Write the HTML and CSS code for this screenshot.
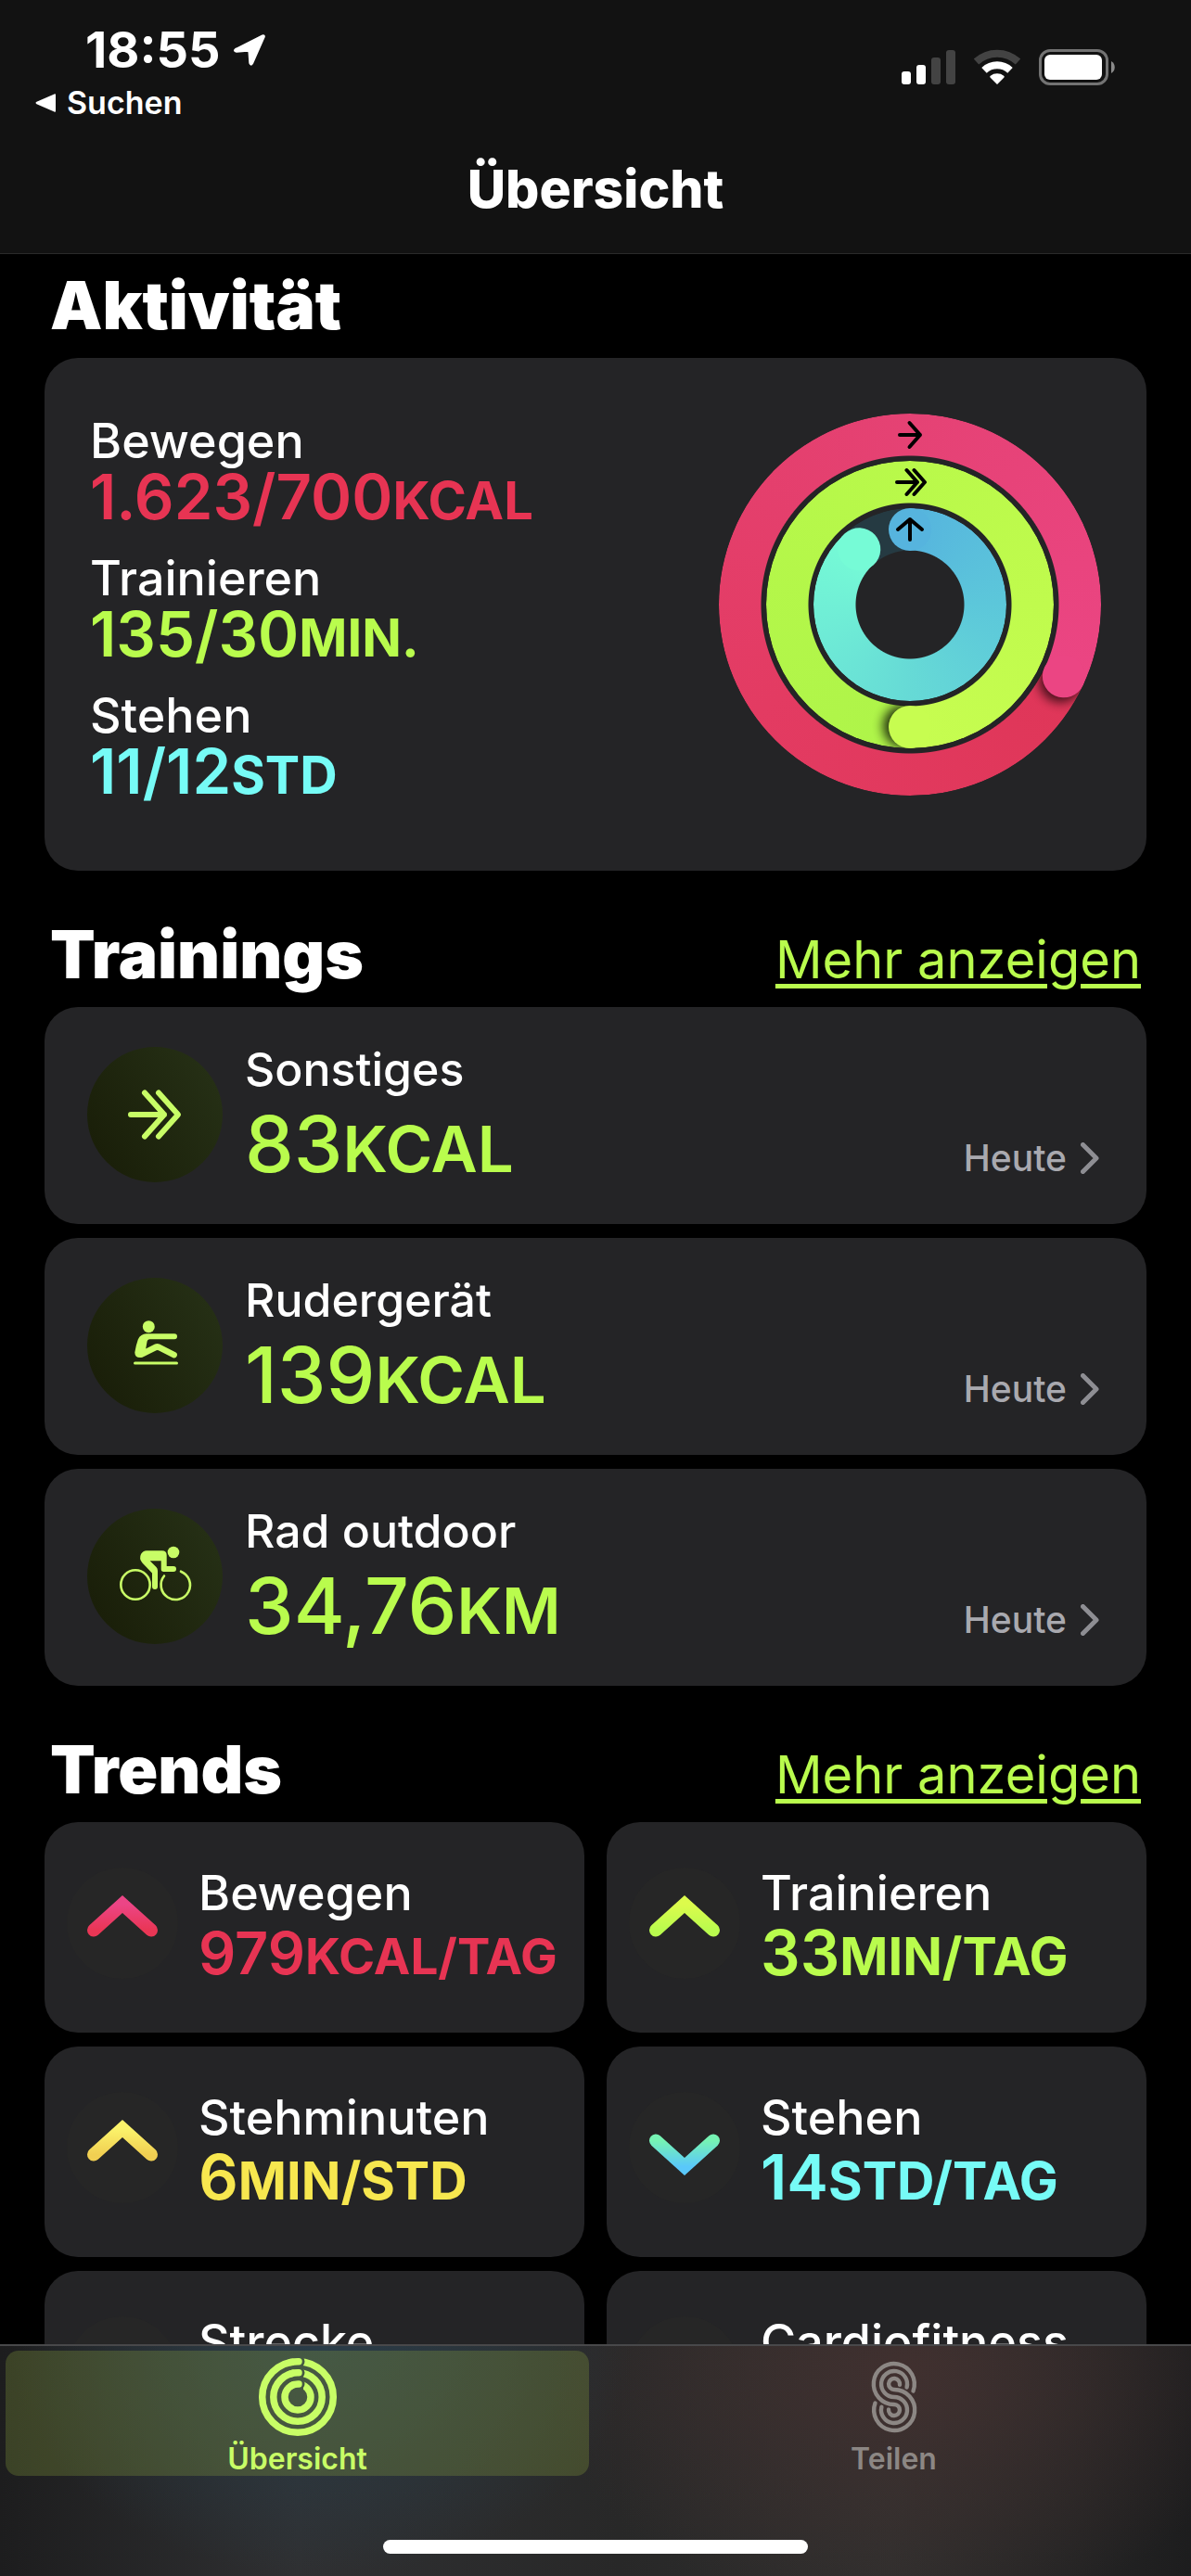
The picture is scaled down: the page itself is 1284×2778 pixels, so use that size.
FILE: index.html
```html
<!DOCTYPE html>
<html lang="de">

<head>
	<meta charset="UTF-8">
	<meta name="viewport" content="width=device-width, initial-scale=1.0">
	<title>Übersicht</title>
	<link rel="stylesheet" href="styles.css">
</head>

<body>
	<header class="topbar">
		<div class="status">
			<div class="status-left">
				<div class="clock">
					<span>18:55</span>
					<svg width="34" height="34" viewBox="0 0 34 34"><path d="M2 16 L31 1.500 Q33.500 .8 32.600 3.200 L20 31.500 Q18.300 34 17.300 31 L16.500 19.500 Q16.300 17.800 14.800 17.800 L3 18.800 Q-.5 18 2 16Z" fill="#fff" stroke="#fff" stroke-width="2" stroke-linejoin="round"/></svg>
				</div>
				<a class="back" href="#">
					<svg width="22" height="22" viewBox="0 0 22 22"><path d="M20.500 1.500 Q22 .6 22 2.500 V19.500 Q22 21.400 20.500 20.500 L1.500 12.200 Q-.5 11 1.500 9.800Z" fill="#fff"/></svg>
					<span>Suchen</span>
				</a>
			</div>
			<div class="status-right">
				<svg width="58" height="38" viewBox="0 0 58 38">
					<rect x="0" y="24" width="10" height="14" rx="3" fill="#fff"/>
					<rect x="16" y="17" width="10" height="21" rx="3" fill="#fff"/>
					<rect x="32" y="9" width="10" height="29" rx="3" fill="#434343"/>
					<rect x="48" y="1" width="10" height="37" rx="3" fill="#434343"/>
				</svg>
				<svg width="50" height="38" viewBox="0 0 50 38">
					<path d="M2.500 13.500 A33 33 0 0 1 47.500 13.500" fill="none" stroke="#434343" stroke-width="8"/>
					<path d="M11 22.800 A20.500 20.500 0 0 1 39 22.800" fill="none" stroke="#fff" stroke-width="8"/>
					<path d="M25 38 L17.500 30.500 Q16.800 29.500 17.800 28.800 A11.700 11.700 0 0 1 32.200 28.800 Q33.200 29.500 32.500 30.500Z" fill="#fff"/>
				</svg>
				<svg width="82" height="39" viewBox="0 0 82 39">
					<rect x="1.500" y="1.500" width="72" height="36" rx="10.500" fill="none" stroke="#737373" stroke-width="3"/>
					<rect x="6" y="6" width="62" height="27" rx="6" fill="#fff"/>
					<path d="M78 13 A7.500 7.500 0 0 1 78 26Z" fill="#8a8a8a"/>
				</svg>
			</div>
		</div>
		<h1>Übersicht</h1>
	</header>

	<main class="content">
		<section>
			<div class="section-head">
				<h2>Aktivität</h2>
			</div>
			<div class="card activity">
				<dl class="goals">
					<div>
						<dt>Bewegen</dt>
						<dd class="move">1.623/700<small>KCAL</small></dd>
					</div>
					<div>
						<dt>Trainieren</dt>
						<dd class="exercise">135/30<small>MIN.</small></dd>
					</div>
					<div>
						<dt>Stehen</dt>
						<dd class="stand">11/12<small>STD</small></dd>
					</div>
				</dl>
				<div class="rings">
					<div class="ring ring-move"></div>
					<div class="ring ring-exercise"></div>
					<div class="ring ring-stand"></div>
					<svg class="ring-caps" viewBox="0 0 412 412">
						<defs>
							<filter id="soft" x="-50%" y="-50%" width="200%" height="200%"><feGaussianBlur stdDeviation="6"/></filter>
							<clipPath id="halfMove"><path d="M206 0 A206 206 0 0 1 206 412 V366 A160 160 0 0 0 206 46Z"/></clipPath>
							<clipPath id="halfExercise"><path d="M206 51 A155 155 0 0 1 206 361 V315 A109 109 0 0 0 206 97Z"/></clipPath>
						</defs>
						<g transform="rotate(115 206 206)">
							<g clip-path="url(#halfMove)"><circle cx="212" cy="24" r="23" fill="#000" opacity=".7" filter="url(#soft)"/></g>
							<circle cx="206" cy="23" r="23" fill="#eb4583"/>
						</g>
						<g transform="rotate(180 206 206)">
							<g clip-path="url(#halfExercise)"><circle cx="212" cy="75" r="23" fill="#000" opacity=".8" filter="url(#soft)"/></g>
							<circle cx="206" cy="74" r="23" fill="#c7fd50"/>
						</g>
						<circle cx="206" cy="125" r="23" fill="#56b4de"/>
						<circle cx="206" cy="125" r="23" fill="#76fbd6" transform="rotate(-42.500 206 206)"/>
						<g fill="none" stroke="#000" stroke-width="4" stroke-linecap="round" stroke-linejoin="round">
							<path d="M195 23 H217 M205.500 10 L217 23 L205.500 36"/>
							<path d="M192 74 H214 M202.500 61 L214 74 L202.500 87 M210.500 61 L222 74 L210.500 87"/>
							<path d="M206 136 V114 M193 125 L206 114 L219 125"/>
						</g>
					</svg>
				</div>
			</div>
		</section>

		<section>
			<div class="section-head">
				<h2>Trainings</h2>
				<a href="#">Mehr anzeigen</a>
			</div>
			<div class="list">
				<a class="card workout" href="#">
					<svg class="badge" viewBox="0 0 146 146" fill="none" stroke="#c8fd66" stroke-width="6" stroke-linecap="round" stroke-linejoin="round">
						<path d="M47 73 H83 M62 49.500 L83 73 L62 96.500 M77 49.500 L98 73 L77 96.500"/>
					</svg>
					<div class="info">
						<span class="label">Sonstiges</span>
						<strong>83<small>KCAL</small></strong>
					</div>
					<span class="when">Heute
						<svg width="20" height="34" viewBox="0 0 20 34"><path d="M2.500 2.500 L17 17 L2.500 31.500"/></svg>
					</span>
				</a>
				<a class="card workout" href="#">
					<svg class="badge" viewBox="0 0 146 146" fill="#c8fd66">
						<circle cx="66.300" cy="52.700" r="6.500"/>
						<path d="M64 60.300 H94 A3 3 0 0 1 94 66.300 H67 Q65 66.500 64.600 68.500 L63.200 76.500 L73 71.600 Q75.500 70.400 78 71.600 L95.200 80.200 A3.300 3.300 0 0 1 92.500 86.200 L76.800 78.200 Q75.700 77.700 74.600 78.200 L59.500 85.800 Q51.500 87.200 51.300 80.500 Q52.500 73 54.800 66.500 Q57.500 60.600 64 60.300Z"/>
						<rect x="50" y="90.500" width="48" height="3" rx="1.500"/>
					</svg>
					<div class="info">
						<span class="label">Rudergerät</span>
						<strong>139<small>KCAL</small></strong>
					</div>
					<span class="when">Heute
						<svg width="20" height="34" viewBox="0 0 20 34"><path d="M2.500 2.500 L17 17 L2.500 31.500"/></svg>
					</span>
				</a>
				<a class="card workout" href="#">
					<svg class="badge" viewBox="0 0 146 146" fill="#c8fd66">
						<circle cx="93" cy="47" r="6.300"/>
						<path d="M64 45.300 H80.700 Q85.700 45.300 85.700 50.300 V62 H93 A3 3 0 0 1 93 68 H82.500 Q79.700 68 79.700 65.300 V56.300 H67.700 L74.500 63 Q76 64.500 76 67 V84 A3 3 0 0 1 70 84 V69.500 L59.500 58.500 Q55.500 54 58 49 Q60 45.500 64 45.300Z"/>
						<g fill="none" stroke="#c8fd66" stroke-width="2.600" stroke-linecap="round">
							<circle cx="52" cy="82" r="15.700"/>
							<path d="M83 72.500 A15.700 15.700 0 1 0 101 67.700"/>
						</g>
					</svg>
					<div class="info">
						<span class="label">Rad outdoor</span>
						<strong>34,76<small>KM</small></strong>
					</div>
					<span class="when">Heute
						<svg width="20" height="34" viewBox="0 0 20 34"><path d="M2.500 2.500 L17 17 L2.500 31.500"/></svg>
					</span>
				</a>
			</div>
		</section>

		<section>
			<div class="section-head">
				<h2>Trends</h2>
				<a href="#">Mehr anzeigen</a>
			</div>
			<svg width="0" height="0" class="defs">
				<defs>
					<linearGradient id="gMove" x1="0" y1="0" x2="0" y2="1"><stop offset="0" stop-color="#ec4586"/><stop offset="1" stop-color="#e93655"/></linearGradient>
					<linearGradient id="gExercise" x1="0" y1="0" x2="0" y2="1"><stop offset="0" stop-color="#dcfb4c"/><stop offset="1" stop-color="#b9fb4e"/></linearGradient>
					<linearGradient id="gMinutes" x1="0" y1="0" x2="0" y2="1"><stop offset="0" stop-color="#fbf36b"/><stop offset="1" stop-color="#f1cf52"/></linearGradient>
					<linearGradient id="gStand" x1="0" y1="0" x2="0" y2="1"><stop offset="0" stop-color="#76f3b4"/><stop offset="1" stop-color="#5ac8fa"/></linearGradient>
				</defs>
			</svg>
			<div class="trends">
				<article class="card trend">
					<svg class="arrow" viewBox="0 0 120 120"><path d="M29 67.500 L60 39.500 L91 67.500" stroke="url(#gMove)"/></svg>
					<div class="info">
						<span class="label">Bewegen</span>
						<strong class="move long">979<small>KCAL/TAG</small></strong>
					</div>
				</article>
				<article class="card trend">
					<svg class="arrow" viewBox="0 0 120 120"><path d="M29 67.500 L60 39.500 L91 67.500" stroke="url(#gExercise)"/></svg>
					<div class="info">
						<span class="label">Trainieren</span>
						<strong class="exercise">33<small>MIN/TAG</small></strong>
					</div>
				</article>
				<article class="card trend">
					<svg class="arrow" viewBox="0 0 120 120"><path d="M29 67.500 L60 39.500 L91 67.500" stroke="url(#gMinutes)"/></svg>
					<div class="info">
						<span class="label">Stehminuten</span>
						<strong class="minutes">6<small>MIN/STD</small></strong>
					</div>
				</article>
				<article class="card trend">
					<svg class="arrow" viewBox="0 0 120 120"><path d="M29 52.500 L60 80.500 L91 52.500" stroke="url(#gStand)"/></svg>
					<div class="info">
						<span class="label">Stehen</span>
						<strong class="stand">14<small>STD/TAG</small></strong>
					</div>
				</article>
				<article class="card trend">
					<svg class="arrow" viewBox="0 0 120 120"></svg>
					<div class="info">
						<span class="label">Strecke</span>
					</div>
				</article>
				<article class="card trend">
					<svg class="arrow" viewBox="0 0 120 120"></svg>
					<div class="info">
						<span class="label">Cardiofitness</span>
					</div>
				</article>
			</div>
		</section>
	</main>

	<footer class="bottom">
		<nav class="tabs">
			<a class="tab active" href="#">
				<svg width="86" height="86" viewBox="-43 -43 86 86" fill="none" stroke="currentColor" stroke-width="7.500">
					<mask id="gaps" maskUnits="userSpaceOnUse" x="-43" y="-43" width="86" height="86">
						<rect x="-43" y="-43" width="86" height="86" fill="#fff" stroke="none"/>
						<g fill="#000" stroke="none">
							<rect x="0" y="-43" width="6" height="36"/>
							<circle cx="1" cy="-38.300" r="6.500"/>
							<circle cx="1" cy="-26.200" r="6.500"/>
							<circle cx="1" cy="-14" r="6.500"/>
						</g>
					</mask>
					<g mask="url(#gaps)">
						<circle r="38.300"/>
						<circle r="26.200"/>
						<circle r="14"/>
					</g>
					<g stroke-linecap="round">
						<path d="M-8 -37.450 A38.300 38.300 0 0 1 1 -38.300"/>
						<path d="M-8 -25 A26.200 26.200 0 0 1 1 -26.200"/>
						<path d="M-6 -12.600 A14 14 0 0 1 1 -14"/>
					</g>
				</svg>
				<span>Übersicht</span>
			</a>
			<a class="tab" href="#">
				<svg width="86" height="86" viewBox="-19 -5 86 86" fill="none" stroke="currentColor" stroke-width="4.400" stroke-linecap="round">
					<path d="M44.500 31.500 A22 22 0 1 0 24 46 A6 6 0 1 1 18 51.500"/>
					<path d="M37.600 27.500 A14 14 0 1 0 24 38 A14 14 0 1 1 10.400 48.700"/>
					<path d="M30 24.800 A6 6 0 1 0 24 30 A22 22 0 1 1 3.500 44.500"/>
				</svg>
				<span>Teilen</span>
			</a>
		</nav>
		<div class="home-bar"></div>
	</footer>
</body>

</html>
```
FILE: styles.css
```css
:root {
	--card: #242426;
	--move: #e73453;
	--exercise: #b9fc4d;
	--stand: #76fbf6;
	--minutes: #f7e74f;
	--side: 48px;
}

*,
*:before,
*:after {
	box-sizing: border-box;
}

body,
h1,
h2,
dl,
dd {
	margin: 0;
	padding: 0;
}

body {
	display: flex;
	flex-direction: column;
	height: 100vh;
	overflow: hidden;
	background: #000;
	color: #fff;
	font-family: Inter, "Liberation Sans", sans-serif;
	font-size: 52px;
	line-height: 64px;
}

a {
	color: inherit;
	text-decoration: none;
}

svg {
	display: block;
	flex: none;
}

/* units after a number, must not stretch the line */
small {
	font-size: 56px;
	font-weight: 700;
	line-height: 40px;
}

.defs {
	position: absolute;
}

/* top bar */

.topbar {
	flex: none;
	background: #121212;
	border-bottom: 1px solid #2a2a2a;
	padding: 22px 0 35px;
}

.status {
	display: flex;
	justify-content: space-between;
	padding: 0 82px 0 38px;
}

.clock {
	display: flex;
	align-items: center;
	gap: 14px;
	padding-left: 54px;
	font-size: 54px;
	font-weight: 700;
}

.back {
	display: flex;
	align-items: center;
	gap: 12px;
	font-size: 34px;
	font-weight: 600;
	line-height: 50px;
}

.status-right {
	display: flex;
	align-items: center;
	gap: 20px;
	height: 100px;
}

.topbar h1 {
	padding-top: 34px;
	font-size: 57px;
	font-weight: 800;
	line-height: 68px;
	text-align: center;
}

/* content */

.content {
	flex: 1;
	min-height: 0;
	overflow-y: auto;
	scrollbar-width: none;
	padding: 11px var(--side) 0;
}

.content section {
	margin-bottom: 46px;
}

.section-head {
	display: flex;
	justify-content: space-between;
	align-items: baseline;
	padding: 0 6px 13px;
}

.section-head h2 {
	font-size: 71px;
	font-weight: 900;
	line-height: 88px;
}

.section-head a {
	color: var(--exercise);
	font-size: 56px;
	text-decoration: underline;
	text-decoration-thickness: 5px;
	text-underline-offset: 6px;
}

.card {
	background: var(--card);
	border-radius: 36px;
}

.move {
	color: var(--move);
}

.exercise {
	color: var(--exercise);
}

.stand {
	color: var(--stand);
}

.minutes {
	color: var(--minutes);
}

/* activity */

.activity {
	display: flex;
	justify-content: space-between;
	align-items: center;
	padding: 58px 49px 79px;
}

.goals {
	display: flex;
	flex-direction: column;
	gap: 28px;
}

.goals dt {
	font-weight: 500;
}

.goals dd {
	font-size: 67px;
	font-weight: 600;
	line-height: 56px;
}

.rings {
	display: grid;
	width: 412px;
	height: 412px;
}

.ring,
.ring-caps {
	grid-area: 1 / 1;
	place-self: center;
	border-radius: 50%;
}

.ring-caps {
	z-index: 1;
	width: 412px;
	height: 412px;
}

.ring-move {
	width: 412px;
	height: 412px;
	background: conic-gradient(from 115deg, #df3658, #e33b62 120deg, #e54274 245deg, #eb4583);
	mask: radial-gradient(circle, transparent 160px, #000 161px);
}

.ring-exercise {
	width: 310px;
	height: 310px;
	background: conic-gradient(from 180deg, #aef449, #b9f94a 180deg, #c7fd50);
	mask: radial-gradient(circle, transparent 109px, #000 110px);
}

.ring-stand {
	width: 208px;
	height: 208px;
	background: conic-gradient(#56b4de, #5cc7da 90deg, #66dad6 180deg, #76fbd6 317deg, #253a42 317deg);
	mask: radial-gradient(circle, transparent 58px, #000 59px);
}

/* workouts */

.list {
	display: flex;
	flex-direction: column;
	gap: 15px;
}

.workout {
	display: flex;
	align-items: center;
	gap: 24px;
	padding: 35px 51px 37px 46px;
}

.badge {
	width: 146px;
	height: 146px;
	border-radius: 50%;
	background: linear-gradient(60deg, #181c07, #273217);
}

.info {
	flex: 1;
	min-width: 0;
	white-space: nowrap;
}

.label {
	display: block;
	font-weight: 500;
}

.info strong {
	display: block;
	font-weight: 600;
}

.workout .label {
	font-size: 50px;
}

.workout strong {
	color: var(--exercise);
	font-size: 84px;
	font-weight: 500;
	line-height: 98px;
}

.workout small {
	font-size: 69px;
	font-weight: 600;
}

.when {
	display: flex;
	align-self: flex-end;
	align-items: center;
	gap: 15px;
	margin-bottom: 11px;
	color: #a9a9af;
	font-size: 39px;
	font-weight: 500;
	line-height: 46px;
}

.when path {
	fill: none;
	stroke: #8e8e93;
	stroke-width: 5;
	stroke-linecap: round;
	stroke-linejoin: round;
}

/* trends */

.trends {
	display: grid;
	grid-template-columns: 1fr 1fr;
	gap: 15px 24px;
}

.trend {
	display: flex;
	align-items: center;
	gap: 22px;
	min-width: 0;
	min-height: 227px;
	padding: 45px 0 54px 24px;
}

.trend .info {
	align-self: flex-start;
}

.arrow {
	width: 120px;
	height: 120px;
	border-radius: 50%;
	background: #262626;
}

.arrow path {
	fill: none;
	stroke-width: 14;
	stroke-linecap: round;
}

.trend strong {
	font-size: 67px;
	line-height: 64px;
}

.trend .long {
	font-size: 63px;
}

.trend .long small {
	font-size: 53px;
}

/* tab bar */

.bottom {
	flex: none;
	border-top: 2px solid #48484a;
	padding: 5px 6px 24px;
	background:
		radial-gradient(ellipse 26% 100% at 27% 0, #2a3c48, transparent),
		radial-gradient(ellipse 30% 110% at 76% 10%, #40302f, transparent),
		linear-gradient(90deg, #1d1d1e, #2f3032 25%, #282828 52%, #2f2f2e 75%, #1d1d1e);
}

.tabs {
	display: grid;
	grid-template-columns: 1fr 1fr;
	gap: 14px;
}

.tab {
	display: flex;
	flex-direction: column;
	align-items: center;
	padding-top: 7px;
	border-radius: 14px;
	color: #8c8784;
	font-size: 32px;
	font-weight: 600;
	line-height: 36px;
}

.tab.active {
	background: rgba(140, 165, 60, .28);
	color: #c8fd66;
}

.tab span {
	padding-top: 6px;
}

.home-bar {
	width: 36%;
	height: 15px;
	margin: 69px auto 0;
	border-radius: 8px;
	background: #fff;
}
```
